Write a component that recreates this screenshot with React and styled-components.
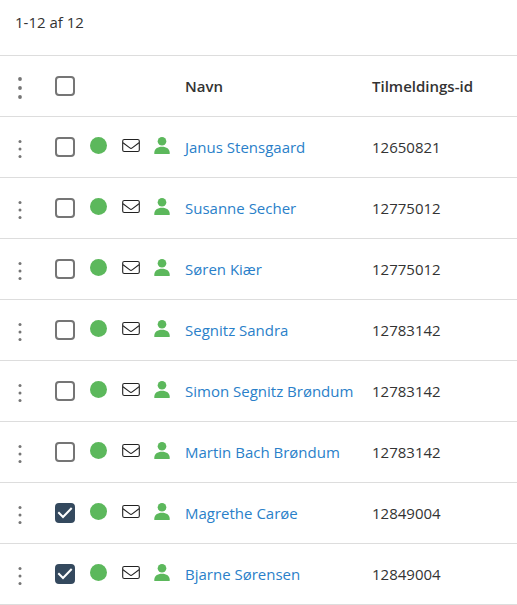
import React, { useState } from "react";
import styled, { createGlobalStyle } from "styled-components";

const GlobalStyle = createGlobalStyle`
  *, *::before, *::after { box-sizing: border-box; }
  body {
    margin: 0;
    background: #fff;
    color: #333;
    font-family: "Open Sans", sans-serif;
    font-size: 15px;
    line-height: 20px;
  }
`;

const Page = styled.main`
  width: 100%;
`;

const Summary = styled.p`
  margin: 0;
  padding: 12px 15px 23px;
`;

const Table = styled.table`
  width: 100%;
  table-layout: fixed;
  border-collapse: separate;
  border-spacing: 0;
  border-top: 1px solid #ddd;
`;

const Col = styled.col`
  width: ${(p) => p.$width || "auto"};
`;

const Cell = styled.td`
  height: 61px;
  padding: 0;
  border-bottom: 1px solid #ddd;
  text-align: left;
  vertical-align: middle;
  white-space: nowrap;
`;

const HeadCell = styled(Cell)`
  font-weight: 600;
`;

const IconCell = styled(Cell)`
  padding-bottom: 3px;
`;

const Icon = styled.svg`
  display: block;
`;

const MenuButton = styled.button`
  display: flex;
  align-items: center;
  justify-content: center;
  width: 40px;
  height: 40px;
  padding: 4px 0 0;
  border: 0;
  background: none;
  color: #757575;
  cursor: pointer;
`;

const CheckLabel = styled.label`
  display: grid;
  width: 20px;
  height: 20px;
  margin-left: 15px;
  cursor: pointer;

  > * {
    grid-area: 1 / 1;
  }
`;

const CheckInput = styled.input`
  appearance: none;
  width: 20px;
  height: 20px;
  margin: 0;
  border: 2px solid #757575;
  border-radius: 4px;
  background: #fff;
  cursor: pointer;

  &:checked {
    border-color: #34495e;
    background: #34495e;
  }

  & + svg {
    visibility: hidden;
    pointer-events: none;
  }

  &:checked + svg {
    visibility: visible;
  }
`;

const NameLink = styled.a`
  color: #2a7fc9;
  text-decoration: none;

  &:hover {
    text-decoration: underline;
  }
`;

const participants = [
  { name: "Janus Stensgaard", id: "12650821" },
  { name: "Susanne Secher", id: "12775012" },
  { name: "Søren Kiær", id: "12775012" },
  { name: "Segnitz Sandra", id: "12783142" },
  { name: "Simon Segnitz Brøndum", id: "12783142" },
  { name: "Martin Bach Brøndum", id: "12783142" },
  { name: "Magrethe Carøe", id: "12849004", selected: true },
  { name: "Bjarne Sørensen", id: "12849004", selected: true },
];

function Menu({ label, large }) {
  const step = large ? 9 : 7.5;
  const radius = large ? 1.9 : 1.5;
  return (
    <MenuButton type="button" aria-label={label}>
      <Icon width="6" height="24" viewBox="0 0 6 24" fill="currentColor" aria-hidden="true">
        <circle cx="3" cy={12 - step} r={radius} />
        <circle cx="3" cy="12" r={radius} />
        <circle cx="3" cy={12 + step} r={radius} />
      </Icon>
    </MenuButton>
  );
}

function Checkbox({ label, checked, onChange }) {
  return (
    <CheckLabel>
      <CheckInput type="checkbox" aria-label={label} checked={checked} onChange={onChange} />
      <Icon width="20" height="20" viewBox="0 0 20 20" fill="none" stroke="#fff" strokeWidth="2" aria-hidden="true">
        <path d="M3.3 9.3 8 14 16.7 5" />
      </Icon>
    </CheckLabel>
  );
}

function StatusIcon() {
  return (
    <Icon width="17" height="17" viewBox="0 0 17 17" role="img" aria-label="Status">
      <circle cx="8.5" cy="8.5" r="8.5" fill="#5cb85c" />
    </Icon>
  );
}

function MailIcon() {
  return (
    <Icon width="18" height="17" viewBox="0 0 18 17" fill="none" stroke="#222" role="img" aria-label="E-mail">
      <rect x="0.7" y="2.5" width="16.6" height="12" rx="1.6" strokeWidth="1.1" />
      <path d="M1 5.8 7.8 10.9Q9 11.8 10.2 10.9L17 5.8" strokeWidth="1.1" />
    </Icon>
  );
}

function PersonIcon() {
  return (
    <Icon width="16" height="17" viewBox="0 0 16 17" fill="#5cb85c" role="img" aria-label="Person">
      <circle cx="8" cy="4.3" r="4.3" />
      <path d="M0.3 17V15.8C0.3 12 3.4 9.8 8 9.8s7.7 2.2 7.7 6V17Z" />
    </Icon>
  );
}

export default function App() {
  const [selected, setSelected] = useState(participants.map((p) => Boolean(p.selected)));
  const all = selected.every(Boolean);
  const toggle = (index) => setSelected(selected.map((s, i) => (i === index ? !s : s)));

  return (
    <Page>
      <GlobalStyle />
      <Summary>1-12 af 12</Summary>
      <Table>
        <colgroup>
          <Col $width="40px" />
          <Col $width="50px" />
          <Col $width="32px" />
          <Col $width="32px" />
          <Col $width="31px" />
          <Col $width="187px" />
          <Col />
        </colgroup>
        <thead>
          <tr>
            <HeadCell as="th">
              <Menu label="Menu" large />
            </HeadCell>
            <HeadCell as="th">
              <Checkbox label="Vælg alle" checked={all} onChange={() => setSelected(selected.map(() => !all))} />
            </HeadCell>
            <HeadCell colSpan={3} />
            <HeadCell as="th" scope="col">Navn</HeadCell>
            <HeadCell as="th" scope="col">Tilmeldings-id</HeadCell>
          </tr>
        </thead>
        <tbody>
          {participants.map((p, i) => (
            <tr key={p.name}>
              <Cell>
                <Menu label={`Menu for ${p.name}`} />
              </Cell>
              <Cell>
                <Checkbox label={`Vælg ${p.name}`} checked={selected[i]} onChange={() => toggle(i)} />
              </Cell>
              <IconCell><StatusIcon /></IconCell>
              <IconCell><MailIcon /></IconCell>
              <IconCell><PersonIcon /></IconCell>
              <Cell><NameLink href="#">{p.name}</NameLink></Cell>
              <Cell>{p.id}</Cell>
            </tr>
          ))}
        </tbody>
      </Table>
    </Page>
  );
}
